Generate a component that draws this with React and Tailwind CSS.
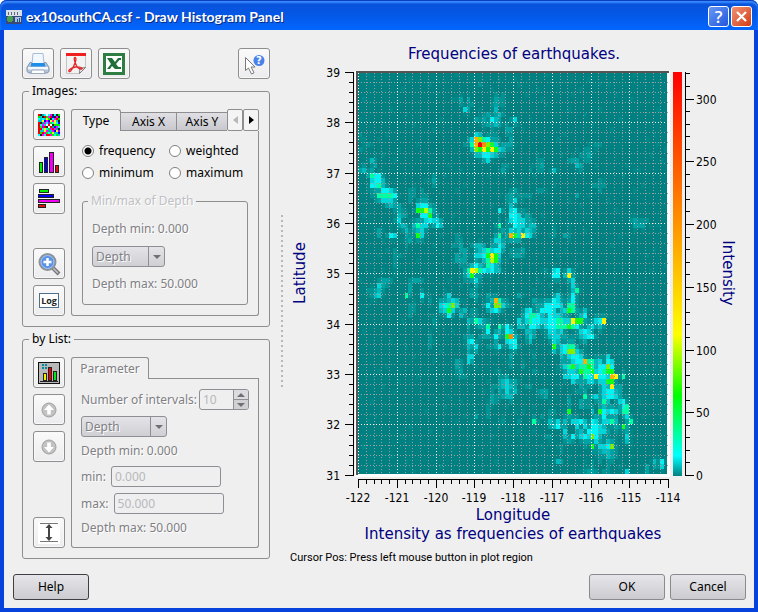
import React, { useState } from "react";

const LEVEL_COLORS = {
  1: "#008888",
  2: "#009393",
  3: "#00a3a3",
  4: "#00babd",
  5: "#00d6da",
  6: "#00f4f4",
  7: "#00ffa0",
  8: "#10ff18",
  9: "#80f000",
  y: "#fff000",
  g: "#b4ff00",
  o: "#ffb000",
  n: "#ff8c00",
  r: "#ff0000",
};

// one entry per 0.1 degree row, "column:levels" runs, dots are empty cells
const QUAKES = {
  1: "20:1 40:1",
  2: "31:2 62:1",
  3: "46:1",
  4: "35:2 55:1",
  5: "26:3.3 34:13.2",
  6: "27:12 35:3 48:1",
  7: "27:53 34:14.1 62:1",
  8: "28:1 32:23.34",
  9: "0:1 30:3.32643 40:5 44:1",
  10: "32:2.343 41:1",
  11: "36:1.3",
  12: "0:2 30:541.2 39:2",
  13: "1:1 29:5o976.3",
  14: "2:21 28:27orn9852.331 61:2 77:1",
  15: "0:2 29:498y8y854 59:2",
  16: "29:14466542 46:1 58:23",
  17: "3:42 31:1.51 46:2 55:331.2",
  18: "3:23 38:21 46:2 56:43 61:1",
  19: "0:34 37:31 44:2..2..4 71:1",
  20: "2:37662 33:1",
  21: "3:5664 19:3",
  22: "2:16674 19:2 60:2222",
  23: "3:2.3665 13:22 40:3 47:2",
  24: "5:77776 13:22.22 38:2.2.2 44:2 56:3",
  25: "4:235553 13:2 40:5 54:1",
  26: "8:433 15:5663 39:4",
  27: "10:3.1..88g73 36:6..562",
  28: "10:43 16:6682 39:6652.2",
  29: "10:51.12..5655 39:56553 71:322",
  30: "10:34.14755.364 24:1 36:7..2655344 71:3.3.1",
  31: "5:3 12:4..45 36:2.25453543 50:2",
  32: "5:3..65...2.85 36:7.3o85y65 50:2..32",
  33: "6:1 12:2 25:22 35:55...33",
  34: "12:2 24:2 30:44..3364",
  35: "12:1 26:33 31:457566 40:2.3",
  36: "9:2.1 25:3.3 30:5568y85 40:332",
  37: "25:33 30:3.47g84",
  38: "9:2 27:2.464.764",
  39: "27:37yg765644 48:2.56..5",
  40: "27:3583 50:66.4y3",
  41: "6:33 14:33 28:2.5 50:2....5",
  42: "5:53 13:3 30:3 55:5",
  43: "2:2.34 29:2 55:47",
  44: "2:1245 12:72 16:6 23:5 30:3..3.2 41:3 51:52..6",
  45: "18:2 21:33454 30:2..24o73 46:2.3.653.36",
  46: "14:2 21:56795 33:6.9953 45:2.366665.77",
  47: "13:2 21:4585.34 30:2..3564 42:256..6665.45873 58:4",
  48: "13:2 23:6 26:4 30:2 43:67764.65543...46",
  49: "19:2 28:43753 41:5.576655667755y883.356y",
  50: "19:1 28:3..3.7..7.6 41:44.665.566777876..4534",
  51: "18:1 28:2 33:6.34.65 43:443...5545....5653",
  52: "28:3 32:3..6..8n4 44:5 49:455.3 57:4566",
  53: "18:2 28:56 35:3..566 44:4 50:54 55:3 58:3",
  54: "28:4.5 33:2.36..56 50:835677",
  55: "28:32 39:2 50:4.569953",
  56: "28:55 45:2 52:4.5665 64:5",
  57: "25:3 28:5 39:2 53:3.566o7745.65",
  58: "25:3 42:2 52:35785778746696",
  59: "26:3 36:2 45:2 54:554877856788",
  60: "26:2 37:2 53:5566.765y665oy.7",
  61: "37:45 40:3 55:5.3.55.5588",
  62: "34:2.3454 43:2 58:2.2..54y3",
  63: "36:3.5.4 46:2.3 56:2.3...356643",
  64: "34:3..344 48:3 58:7.45.5665",
  65: "35:2 54:3 58:2 62:374..56",
  66: "33:2 38:1 57:3.2 63:43..367",
  67: "33:2 42:1 49:2 54:8 60:4.86565.77",
  68: "30:3 47:2 54:3 60:2.3633 69:5",
  69: "29:1 37:2 41:2 45:7 49:4.5.4.5564.65.5574 70:7",
  70: "50:46.3..5.5.66542.3.8",
  71: "45:1 53:5..34.66655 66:2 69:3",
  72: "49:2 53:4.6.5659642 69:5",
  73: "54:3 58:3.253.43 69:4",
  74: "52:2 60:8.5569",
  75: "62:3443",
  76: "62:2.43 70:1",
  77: "51:43 64:2 76:4.6",
  78: "60:2 74:3.3.5",
  79: "58:2.3 64:2....5 74:3",
};

const CELL_W = 3.875;
const CELL_H = 5.03;

const buildCells = () => {
  const grid = Array.from({ length: 80 }, () => Array(80).fill("."));
  Object.entries(QUAKES).forEach(([row, runs]) => {
    runs.split(" ").forEach((run) => {
      const [start, levels] = run.split(":");
      levels.split("").forEach((level, i) => {
        if (Number(start) + i < 80) grid[row][Number(start) + i] = level;
      });
    });
  });

  const cells = [];
  for (let r = 0; r < 80; r++) {
    for (let c = 0; c < 80; c++) {
      let level = grid[r][c];
      if (level === ".") {
        // single weak events around the clusters
        const near = [
          grid[r][c - 1],
          grid[r][c + 1],
          grid[r - 1]?.[c],
          grid[r + 1]?.[c],
        ].filter((v) => v && v !== "." && v !== "1").length;
        const seed = (r * 73 + c * 151 + r * c * 17) % 23;
        if (near > 2) level = seed < 12 ? "3" : "2";
        else if (near > 1 && seed < 16) level = seed < 5 ? "3" : "2";
        else if (near > 0 && seed < 10) level = seed < 3 ? "2" : "1";
        else if (seed === 3) level = "1";
      }
      if (level !== ".") cells.push({ r, c, level });
    }
  }
  return cells;
};

const CELLS = buildCells();
const lonX = (i) => Math.round(68 + i * 38.75);
const latY = (i) => Math.round(32 + i * 50.35);
const intensityY = (v) => Math.round(435 - v * 1.255);
const range = (n) => Array.from({ length: n }, (_, i) => i);

const HistogramPlot = () => (
  <svg
    viewBox="0 0 464 505"
    className="block h-auto w-full font-['DejaVu_Sans_Condensed','DejaVu_Sans',sans-serif]"
    role="img"
    aria-label="Frequencies of earthquakes"
  >
    <defs>
      <linearGradient id="scale" x1="0" y1="1" x2="0" y2="0">
        <stop offset="0" stopColor="#008080" />
        <stop offset="0.05" stopColor="#00ffff" />
        <stop offset="0.2" stopColor="#00ff00" />
        <stop offset="0.35" stopColor="#ffff00" />
        <stop offset="1" stopColor="#ff0000" />
      </linearGradient>
    </defs>

    <g fill="#000080" textAnchor="middle" className="font-['DejaVu_Sans',sans-serif] text-[15px]">
      <text x="224" y="19">Frequencies of earthquakes.</text>
      <text x="223" y="480">Longitude</text>
      <text x="223" y="499">Intensity as frequencies of earthquakes</text>
      <text transform="translate(15 233) rotate(-90)">Latitude</text>
      <text transform="translate(433 233) rotate(90)">Intensity</text>
    </g>

    <g shapeRendering="crispEdges">
      <rect x="65" y="31" width="315" height="406" fill="#fff" />
      <path d="M66 31h313v2H68v402h-2z" fill="#555" />
      <rect x="68" y="33" width="309" height="401" fill="#008080" />
      {CELLS.map(({ r, c, level }) => {
        const x = Math.round(68 + c * CELL_W);
        const y = Math.max(Math.round(32 + r * CELL_H), 33);
        return (
          <rect
            key={`${r}-${c}`}
            x={x}
            y={y}
            width={Math.min(Math.round(68 + (c + 1) * CELL_W), 377) - x}
            height={Math.round(32 + (r + 1) * CELL_H) - y}
            fill={LEVEL_COLORS[level]}
          />
        );
      })}

      {/* grid: every 0.2 degrees, white on full degrees */}
      <g strokeDasharray="1 2">
        {range(41).map((i) => (
          <React.Fragment key={i}>
            <path
              d={`M${lonX(i / 5)}.5 33V434`}
              stroke={i % 5 === 0 ? "#fff" : "#a0a0a4"}
            />
            {i > 0 && (
              <path
                d={`M68 ${latY(i / 5)}.5H379`}
                stroke={i % 5 === 0 ? "#fff" : "#a0a0a4"}
              />
            )}
          </React.Fragment>
        ))}
      </g>

      <g fill="none" stroke="#000">
        <path d="M63.5 32V436M68 439.5H379M395.5 32V436" />
        {range(41).map((i) => (
          <path
            key={i}
            d={`M${i % 5 === 0 ? 55 : 59} ${latY(i / 5)}.5H64M${lonX(i / 5)}.5 439v${i % 5 === 0 ? 9 : 5}`}
          />
        ))}
        {range(33).map((i) => (
          <path
            key={i}
            d={`M395 ${intensityY(i * 10)}.5h${i % 5 === 0 ? 9 : 5}`}
          />
        ))}
      </g>
      <rect x="383" y="32" width="9" height="404" fill="url(#scale)" />
    </g>

    <g className="text-[12px]">
      {range(9).map((i) => (
        <React.Fragment key={i}>
          <text x="50" y={latY(i) + 5} textAnchor="end">
            {39 - i}
          </text>
          <text x={lonX(i)} y="462" textAnchor="middle">
            {i - 122}
          </text>
        </React.Fragment>
      ))}
      {range(7).map((i) => (
        <text key={i} x="406" y={intensityY(i * 50) + 5}>
          {i * 50}
        </text>
      ))}
    </g>
  </svg>
);

const ToolButton = ({ label, disabled, children }) => (
  <button
    type="button"
    aria-label={label}
    disabled={disabled}
    className="flex h-[31px] w-8 shrink-0 items-center justify-center rounded-[3px] border border-[#8e8e8e] bg-linear-to-b from-[#fafafa] to-[#ececee] shadow-[inset_0_0_0_1px_#f8f8f8]"
  >
    {children}
  </button>
);

const PushButton = ({ children, isDefault }) => (
  <button
    type="button"
    className={
      isDefault
        ? "h-[26px] w-[76px] rounded-[3px] border border-[#404044] bg-linear-to-b from-[#e6e6ea] to-[#cbcbd0]"
        : "h-[26px] w-[76px] rounded-[3px] border border-[#8a8a8e] bg-linear-to-b from-[#e6e6ea] to-[#cbcbd0]"
    }
  >
    {children}
  </button>
);

const Radio = ({ value, selected, onSelect }) => (
  <label className="flex h-[22px] items-center gap-[5px]">
    <input
      type="radio"
      name="histType"
      value={value}
      checked={selected === value}
      onChange={() => onSelect(value)}
      className="size-3 appearance-none rounded-full border border-[#808080] bg-white checked:bg-[radial-gradient(circle,#000_0_3px,#fff_4px)]"
    />
    {value}
  </label>
);

const DepthSelect = ({ label }) => (
  <div className="relative w-fit">
    <select
      disabled
      aria-label={label}
      className="block h-[21px] w-full appearance-none rounded-[3px] border border-[#8e8e94] bg-linear-to-b from-[#e4e4e8] to-[#cfcfd4] pr-[18px] pl-[3px] text-[#808084] opacity-100 [text-shadow:1px_1px_0_#fff]"
    >
      <option>Depth</option>
    </select>
    <span className="pointer-events-none absolute inset-y-0 right-0 flex w-[17px] items-center justify-center border-l border-[#8e8e94]">
      <span className="border-x-4 border-t-4 border-x-transparent border-t-[#707074]" />
    </span>
  </div>
);

const MOSAIC = ["#e00", "#00f", "#0e0", "#ff0", "#f0f", "#0ff", "#fff", "#222", "#0cc", "#0aa", "#a0f"];

const MosaicIcon = () => (
  <svg width="22" height="22" shapeRendering="crispEdges">
    {range(121).map((i) => (
      <rect
        key={i}
        x={(i % 11) * 2}
        y={Math.floor(i / 11) * 2}
        width="2"
        height="2"
        fill={MOSAIC[((i * 7919 + i * i * 31 + (i % 5) * i) >> 2) % 11]}
      />
    ))}
  </svg>
);

const PrinterIcon = () => (
  <svg width="24" height="24" viewBox="0 0 24 24">
    <path d="M4 10.500h16l3 5v4l-2 1.500H3l-2-1.500v-4z" fill="#b4c3d6" stroke="#8495ac" />
    <path d="M7 1.500h10l1 10H6z" fill="#f2f8ff" stroke="#a9bdd4" />
    <path d="M5.500 11h13l1 3.500h-15z" fill="#1f8ee6" />
    <path d="M2 15h20v2.500H2z" fill="#f4f8fc" />
    <path d="M6 18h12l1 3.500H5z" fill="#fff" stroke="#9aabbf" />
  </svg>
);

const PdfIcon = () => (
  <svg width="24" height="24" viewBox="0 0 24 24" fill="none">
    <path d="M2.500 1.500h19v14l-6 6h-13z" fill="#f2f2f2" stroke="#c4c4c4" />
    <path d="M2 1h20v3H2z" fill="#f02020" />
    <path d="M21.500 15.500l-6 6 .5-5z" fill="#fff" stroke="#777" />
    <path
      d="M11 5.500c-1.500 0-.5 3.500.5 6 1.500 4 4 6 6.500 5.500 1-1.500-3-2.500-6.500-2S4 18 5 19.500c1.500 1 4.500-4.500 6-8.500s1-5.500 0-5.500z"
      stroke="#e02828"
      strokeWidth="1.300"
    />
  </svg>
);

const SheetIcon = () => (
  <svg width="24" height="24" viewBox="0 0 24 24">
    <path d="M1 1h22v22H1z" fill="#2f7d42" />
    <path d="M4 4h16v16H4z" fill="#fff" />
    <path d="M5 6h5l3 4 3-4h3l-5 6 4 5h-5l-3-3-2 3H5l4-5z" fill="#1f7038" />
    <path d="M16 6h3v2h-3zM14 15h5v2h-5z" fill="#1f7038" />
  </svg>
);

const WhatsThisIcon = () => (
  <svg width="24" height="24" viewBox="0 0 24 24">
    <path d="M3.500 5.500v13l3-2.500 3 6 2.500-1.200-2.900-5.800h4z" fill="#fff" stroke="#777" />
    <circle cx="17" cy="8.500" r="5.500" fill="#4a82ea" />
    <text x="17" y="12" textAnchor="middle" fill="#fff" className="font-['DejaVu_Sans',sans-serif] text-[10px] font-bold">
      ?
    </text>
  </svg>
);

const ColumnsIcon = () => (
  <svg width="22" height="22" stroke="#222" shapeRendering="crispEdges">
    <rect x="1.500" y="11.500" width="3" height="10" fill="#00f000" />
    <rect x="6.500" y="6.500" width="3" height="15" fill="#0000ff" />
    <rect x="11.500" y="1.500" width="4" height="20" fill="#f000f0" />
    <rect x="17.500" y="14.500" width="3" height="7" fill="#e01010" />
  </svg>
);

const BarsIcon = () => (
  <svg width="22" height="22" stroke="#222" shapeRendering="crispEdges">
    <rect x="1.500" y="1.500" width="9" height="3" fill="#00f000" />
    <rect x="0.500" y="6.500" width="15" height="3" fill="#0000ff" />
    <rect x="0.500" y="11.500" width="21" height="3" fill="#f000f0" />
    <rect x="0.500" y="16.500" width="7" height="3" fill="#e01010" />
  </svg>
);

const ZoomIcon = () => (
  <svg width="24" height="24" viewBox="0 0 24 24">
    <path d="m15 15 7 7" stroke="#777" strokeWidth="4" />
    <path d="m16 16 5 5" stroke="#c4c4c4" strokeWidth="1.500" />
    <circle cx="10.500" cy="10" r="8" fill="#5b93e6" stroke="#8f9296" strokeWidth="2" />
    <circle cx="10.500" cy="10" r="6.500" fill="none" stroke="#a9c6f2" />
    <path d="M10.500 6v8M6.500 10h8" stroke="#fff" strokeWidth="2.500" />
  </svg>
);

const LogIcon = () => (
  <svg width="22" height="22" viewBox="0 0 22 22">
    <rect x="1.500" y="3.500" width="19" height="14" fill="#fff" stroke="#4f6f8c" />
    <text x="11" y="14" textAnchor="middle" fill="#222" className="font-['Open_Sans',sans-serif] text-[9px] font-bold">
      Log
    </text>
  </svg>
);

const ListChartIcon = () => (
  <svg width="22" height="22" shapeRendering="crispEdges">
    <rect x="0.500" y="0.500" width="21" height="21" fill="#b8b8b8" stroke="#111" />
    <path d="M4 2h2v2H4zM7 2h2v2H7zM4 5h2v2H4zM7 5h2v2H7z" fill="#008c9c" />
    <g stroke="#222">
      <rect x="5.500" y="11.500" width="3" height="7" fill="#f8f000" />
      <rect x="10.500" y="5.500" width="3" height="13" fill="#f00000" />
      <rect x="15.500" y="9.500" width="3" height="9" fill="#00e818" />
    </g>
    <path d="M2 19h18" stroke="#222" />
  </svg>
);

const ArrowIcon = ({ down }) => (
  <svg width="18" height="18" viewBox="0 0 18 18" className={down ? "rotate-180" : ""}>
    <circle cx="9" cy="9" r="7" fill="#c2c2c2" stroke="#a0a0a0" />
    <path d="M9 3.500 14 9h-3.200v4.500H7.200V9H4z" fill="#fff" />
  </svg>
);

const SpanIcon = () => (
  <svg width="22" height="22" viewBox="0 0 22 22">
    <path d="M0 0h22v22H0z" fill="#fff" />
    <path d="M2 1.500h18M2 19.500h18" stroke="#777" />
    <path d="M11 4v13" stroke="#444" strokeWidth="2" />
    <path d="m11 2 3.500 4h-7zM11 19l3.500-4h-7z" fill="#444" />
  </svg>
);

const MUTED = "text-[#808084] [text-shadow:1px_1px_0_#fff]";
const GROUP = "min-w-0 rounded-[3px] border border-[#8e8e8e]";
const FIELD =
  "h-[21px] w-[110px] rounded-[3px] border border-[#8e8e94] bg-transparent px-[3px] text-[#b8b8bc]";

const ImagesGroup = () => {
  const [type, setType] = useState("frequency");

  return (
    <fieldset className={`${GROUP} mt-1 px-[10px] pt-[10px] pb-[10px]`}>
      <legend className="-ml-1 px-[3px] leading-4">Images:</legend>
      <div className="flex gap-[6px]">
        <div className="flex flex-col gap-[6px]">
          <ToolButton label="Image plot"><MosaicIcon /></ToolButton>
          <ToolButton label="Column chart"><ColumnsIcon /></ToolButton>
          <ToolButton label="Bar chart"><BarsIcon /></ToolButton>
          <div className="h-[22px]" />
          <ToolButton label="Zoom"><ZoomIcon /></ToolButton>
          <ToolButton label="Logarithmic scale"><LogIcon /></ToolButton>
        </div>

        <div className="flex min-w-0 flex-1 flex-col">
          <div role="tablist" className="flex h-[22px] items-end">
            <button role="tab" aria-selected="true" className="h-[22px] w-[50px] rounded-t-[3px] border border-b-0 border-[#8e8e8e]">
              Type
            </button>
            <button role="tab" aria-selected="false" className="h-[19px] w-14 border-y border-r border-[#8e8e8e] bg-linear-to-b from-[#e0e0e4] to-[#c8c8ce]">
              Axis X
            </button>
            <button role="tab" aria-selected="false" className="h-[19px] min-w-0 flex-1 border-y border-[#8e8e8e] bg-linear-to-b from-[#e0e0e4] to-[#c8c8ce]">
              Axis Y
            </button>
            <button aria-label="Scroll tabs left" className="flex h-[22px] w-4 items-center justify-center rounded-[2px] border border-[#8e8e8e] bg-[#f4f4f4]">
              <span className="border-y-4 border-r-5 border-y-transparent border-r-[#b8b8b8]" />
            </button>
            <button aria-label="Scroll tabs right" className="flex h-[22px] w-4 items-center justify-center rounded-[2px] border border-[#8e8e8e] bg-[#f4f4f4]">
              <span className="border-y-4 border-l-5 border-y-transparent border-l-black" />
            </button>
          </div>
          <div className="flex flex-1 flex-col rounded-b-[3px] border border-t-0 border-[#8e8e8e] px-[10px] pt-[9px] pb-[10px]">
            <div className="grid grid-cols-[87px_1fr]">
              {["frequency", "weighted", "minimum", "maximum"].map((v) => (
                <Radio key={v} value={v} selected={type} onSelect={setType} />
              ))}
            </div>
            <fieldset disabled className={`${GROUP} mt-[9px] flex-1 px-[9px]`}>
              <legend className="-ml-1 px-[3px] leading-4 text-[#c0c0c4] [text-shadow:1px_1px_0_#fff]">
                Min/max of Depth
              </legend>
              <div className={`flex flex-col gap-[9px] pt-3 leading-4 ${MUTED}`}>
                <p>Depth min: 0.000</p>
                <div className="w-[73px] *:w-full">
                  <DepthSelect label="Weighting parameter" />
                </div>
                <p>Depth max: 50.000</p>
              </div>
            </fieldset>
          </div>
        </div>
      </div>
    </fieldset>
  );
};

const ListGroup = () => (
  <fieldset className={`${GROUP} mt-1 px-[10px] pt-[10px] pb-[10px]`}>
    <legend className="-ml-1 px-[3px] leading-4">by List:</legend>
    <div className="flex gap-[6px]">
      <div className="flex flex-col gap-[6px]">
        <ToolButton label="Histogram list"><ListChartIcon /></ToolButton>
        <ToolButton label="Move up" disabled><ArrowIcon /></ToolButton>
        <ToolButton label="Move down" disabled><ArrowIcon down /></ToolButton>
        <div className="h-[43px]" />
        <ToolButton label="Full range"><SpanIcon /></ToolButton>
      </div>

      <div className="flex min-w-0 flex-1 flex-col">
        <div role="tablist" className="flex h-[22px]">
          <button role="tab" aria-selected="true" disabled className={`w-[78px] rounded-t-[3px] border border-b-0 border-[#8e8e8e] ${MUTED}`}>
            Parameter
          </button>
          <div className="flex-1 border-b border-[#8e8e8e]" />
        </div>
        <div className={`flex flex-1 flex-col rounded-b-[3px] border border-t-0 border-[#8e8e8e] px-[9px] pt-[10px] leading-4 ${MUTED}`}>
          <div className="flex items-center justify-between">
            <label htmlFor="intervals">Number of intervals:</label>
            <div className="flex h-[21px] w-[50px] overflow-hidden rounded-[3px] border border-[#8e8e94]">
              <input id="intervals" disabled defaultValue="10" className="w-[33px] px-[3px] text-[#b8b8bc]" />
              <div className="flex flex-1 flex-col border-l border-[#8e8e94]">
                <button disabled aria-label="More intervals" className="flex flex-1 items-center justify-center border-b border-[#8e8e94] bg-[#dcdce0]">
                  <span className="border-x-4 border-b-4 border-x-transparent border-b-[#707074]" />
                </button>
                <button disabled aria-label="Fewer intervals" className="flex flex-1 items-center justify-center bg-[#d0d0d5]">
                  <span className="border-x-4 border-t-4 border-x-transparent border-t-[#707074]" />
                </button>
              </div>
            </div>
          </div>
          <div className="mt-[6px] w-[86px] *:w-full">
            <DepthSelect label="Interval parameter" />
          </div>
          <p className="mt-[6px]">Depth min: 0.000</p>
          <label className="mt-[7px] flex items-center gap-[5px]">
            min:
            <input disabled defaultValue="0.000" className={FIELD} />
          </label>
          <label className="mt-[6px] flex items-center gap-[5px]">
            max:
            <input disabled defaultValue="50.000" className={FIELD} />
          </label>
          <p className="mt-[6px]">Depth max: 50.000</p>
        </div>
      </div>
    </div>
  </fieldset>
);

const TitleBar = () => (
  <header className="flex h-[30px] items-center gap-1 rounded-t-[7px] bg-linear-to-b from-[#0a50d8] via-[#0458e6] to-[#0366ff] px-[6px] pt-[3px] shadow-[inset_0_1px_0_#0a3fbf,inset_0_3px_2px_#3a8cff]">
    <svg width="16" height="16" shapeRendering="crispEdges">
      <path d="M0 1h16v14H0z" fill="#3a4a78" />
      <path d="M0 1h16v6H0z" fill="#d8e0ea" />
      <path d="M2 3h1v3H2zM5 3h1v3H5zM8 3h1v3H8zM11 3h1v3h-1z" fill="#667" />
      <circle cx="4" cy="10" r="3" fill="#48a050" />
      <path d="M9 8h6v5H9z" fill="#a8c0e0" />
      <path d="M11 10h1v3h-1zM13 9h1v4h-1z" fill="#205090" />
    </svg>
    <h1 className="flex-1 truncate font-['Lato',sans-serif] text-[14px] font-bold text-white [text-shadow:1px_1px_0_#0a2a80]">
      ex10southCA.csf - Draw Histogram Panel
    </h1>
    <div className="flex gap-[2px]">
      <button aria-label="What's this" className="flex size-[21px] items-center justify-center rounded-[3px] border border-white bg-linear-to-br from-[#6a96f4] to-[#1f55dc] font-['Open_Sans',sans-serif] text-[17px] leading-none font-semibold text-white">
        ?
      </button>
      <button aria-label="Close" className="flex size-[21px] items-center justify-center rounded-[3px] border border-white bg-linear-to-br from-[#f09070] to-[#d03a10]">
        <svg width="13" height="13" viewBox="0 0 13 13">
          <path d="m2 2 9 9M11 2l-9 9" stroke="#fff" strokeWidth="2.200" />
        </svg>
      </button>
    </div>
  </header>
);

const App = () => (
  <div className="min-h-screen bg-white font-['Noto_Sans',sans-serif] text-[12px] text-black">
    <div className="flex min-h-screen flex-col rounded-t-[7px] bg-[#0842dc]">
      <TitleBar />
      <main className="mx-1 mb-1 flex flex-1 flex-col bg-[#efefef]">
        <div className="flex items-start">
          <section className="w-[266px] shrink-0 pt-[18px] pl-[18px]">
            <div className="flex gap-[6px]">
              <ToolButton label="Print"><PrinterIcon /></ToolButton>
              <ToolButton label="Export PDF"><PdfIcon /></ToolButton>
              <ToolButton label="Export spreadsheet"><SheetIcon /></ToolButton>
              <div className="flex-1" />
              <ToolButton label="What's this"><WhatsThisIcon /></ToolButton>
            </div>
            <ImagesGroup />
            <ListGroup />
          </section>

          {/* splitter handle */}
          <div className="mt-2 mr-[7px] ml-[11px] h-[174px] w-[2px] shrink-0 self-center bg-[repeating-linear-gradient(to_bottom,#b8b8b8_0_2px,transparent_2px_5px)]" />

          <section className="min-w-0 flex-1 pt-[10px]">
            <HistogramPlot />
            <p className="mt-[5px] font-['Roboto',sans-serif] text-[11px] leading-4">
              Cursor Pos: Press left mouse button in plot region
            </p>
          </section>
        </div>

        <footer className="mt-auto flex gap-[5px] pr-2 pb-2 pl-[9px]">
          <PushButton isDefault>Help</PushButton>
          <div className="flex-1" />
          <PushButton>OK</PushButton>
          <PushButton>Cancel</PushButton>
        </footer>
      </main>
    </div>
  </div>
);

export default App;
